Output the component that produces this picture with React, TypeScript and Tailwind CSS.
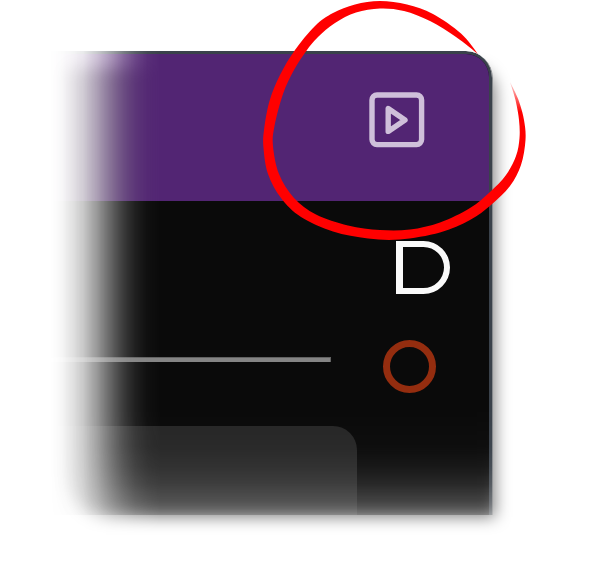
type Point = [number, number];

const outerEdge: Point[] = [
  [478, 54], [461, 33.5], [433, 14], [407, 4.5], [380, 1], [355, 4.5], [333, 13],
  [315, 26], [295, 50], [280, 75], [269.5, 101], [264, 130], [263.5, 148],
  [268, 174], [281, 198], [301, 217], [333, 231.5], [368, 238.5], [400, 239.5],
  [440, 232.5], [470, 220], [491, 205], [510, 186], [521, 165], [525.5, 140],
  [524, 120], [518.5, 100], [510, 82],
];

const innerEdge: Point[] = [
  [510, 82], [515.5, 100], [519, 120], [519.5, 138], [516, 156], [506, 175],
  [490, 192], [470, 208], [440, 222.5], [410, 229.5], [380, 230], [348, 225.5],
  [316, 214.5], [294, 198], [279, 174], [273, 146], [274.5, 126], [283, 94],
  [294, 70], [307, 50], [318, 37], [335, 23], [356, 12.5], [380, 8.5],
  [404, 11], [430, 21], [456, 37], [478, 54],
];

// Catmull-Rom spline through the points, emitted as cubic segments.
function spline(points: Point[]) {
  let d = "";
  for (let i = 0; i < points.length - 1; i++) {
    const a = points[Math.max(0, i - 1)];
    const b = points[i];
    const c = points[i + 1];
    const e = points[Math.min(points.length - 1, i + 2)];
    d += `C${b[0] + (c[0] - a[0]) / 6} ${b[1] + (c[1] - a[1]) / 6} ${c[0] - (e[0] - b[0]) / 6} ${c[1] - (e[1] - b[1]) / 6} ${c[0]} ${c[1]}`;
  }
  return d;
}

function PlayIcon() {
  return (
    <svg className="h-14 w-14" viewBox="0 0 56 56" fill="none" stroke="#cfc0da" strokeWidth="5.4" strokeLinejoin="round">
      <rect x="3" y="3" width="49.6" height="49.6" rx="5" />
      <path d="M19.2 16.6V39.4L36 28Z" />
    </svg>
  );
}

function Annotation() {
  return (
    <svg className="absolute inset-0 h-full w-full" viewBox="0 0 600 565">
      <defs>
        <linearGradient id="tip" gradientUnits="userSpaceOnUse" x1="0" y1="80" x2="0" y2="112">
          <stop offset="0" stopColor="red" stopOpacity="0.1" />
          <stop offset="1" stopColor="red" />
        </linearGradient>
        <clipPath id="tipArea"><rect x="500" y="70" width="50" height="42" /></clipPath>
        <clipPath id="bodyArea"><path d="M0 0H500V112H600V565H0Z" /></clipPath>
      </defs>
      <path d={`M478 54${spline(outerEdge)}${spline(innerEdge)}Z`} fill="red" clipPath="url(#bodyArea)" />
      <path d={`M478 54${spline(outerEdge)}${spline(innerEdge)}Z`} fill="url(#tip)" clipPath="url(#tipArea)" />
    </svg>
  );
}

export default function App() {
  return (
    <div className="relative h-[565px] w-[600px] overflow-hidden bg-white pl-[50px] pt-[51px]">
      <div className="absolute inset-0 [mask-image:linear-gradient(to_right,transparent_48px,rgb(0_0_0/.05)_60px,rgb(0_0_0/.13)_72px,rgb(0_0_0/.23)_83px,rgb(0_0_0/.38)_97px,rgb(0_0_0/.6)_113px,rgb(0_0_0/.84)_135px,black_160px)]">
        <div className="absolute left-[60px] top-[68px] h-[449px] w-[435px] rounded-bl-[50px] rounded-tr-[24px] bg-black/50 blur-[8px]" />
      </div>
      <div className="relative h-[464px] w-[443px] overflow-hidden rounded-tr-[27px] border-r border-[#888b8e] [mask-image:linear-gradient(to_right,transparent,rgb(0_0_0/.02)_12px,rgb(0_0_0/.05)_22px,rgb(0_0_0/.11)_33px,rgb(0_0_0/.27)_47px,rgb(0_0_0/.49)_62px,rgb(0_0_0/.69)_74px,rgb(0_0_0/.85)_86px,rgb(0_0_0/.96)_98px,black_110px),linear-gradient(to_bottom,black_359px,rgb(0_0_0/.97)_396px,rgb(0_0_0/.88)_416px,rgb(0_0_0/.74)_433px,rgb(0_0_0/.53)_449px,rgb(0_0_0/.29)_464px)] [mask-composite:intersect]">
        <div className="flex h-full flex-col overflow-hidden rounded-tr-[26px] border-r-[3px] border-t-[3px] border-[#3a424b] bg-[#0a0a0a]">
          <header className="flex h-[147px] shrink-0 justify-end bg-[#522573] pr-[64px] pt-[38px]">
            <PlayIcon />
          </header>
          <div className="flex h-[225px] shrink-0 justify-between pr-[40px] pt-[40px]">
            <div className="mt-[116px] h-[5px] w-[281px] border-r border-t border-[#626262] bg-[#858585]" />
            <div className="flex w-[66px] flex-col items-start">
              <div className="ml-[13px] h-[53px] w-[54px] shrink-0 rounded-r-full border-[6px] border-l-[7px] border-[#fafafa]" />
              <div className="mt-[46px] h-[53px] w-[53px] rounded-full border-[7px] border-[#942d0f]" />
            </div>
          </div>
          <div className="w-[307px] flex-1 rounded-tr-[24px] bg-[#272727]" />
        </div>
      </div>
      <Annotation />
    </div>
  );
}
